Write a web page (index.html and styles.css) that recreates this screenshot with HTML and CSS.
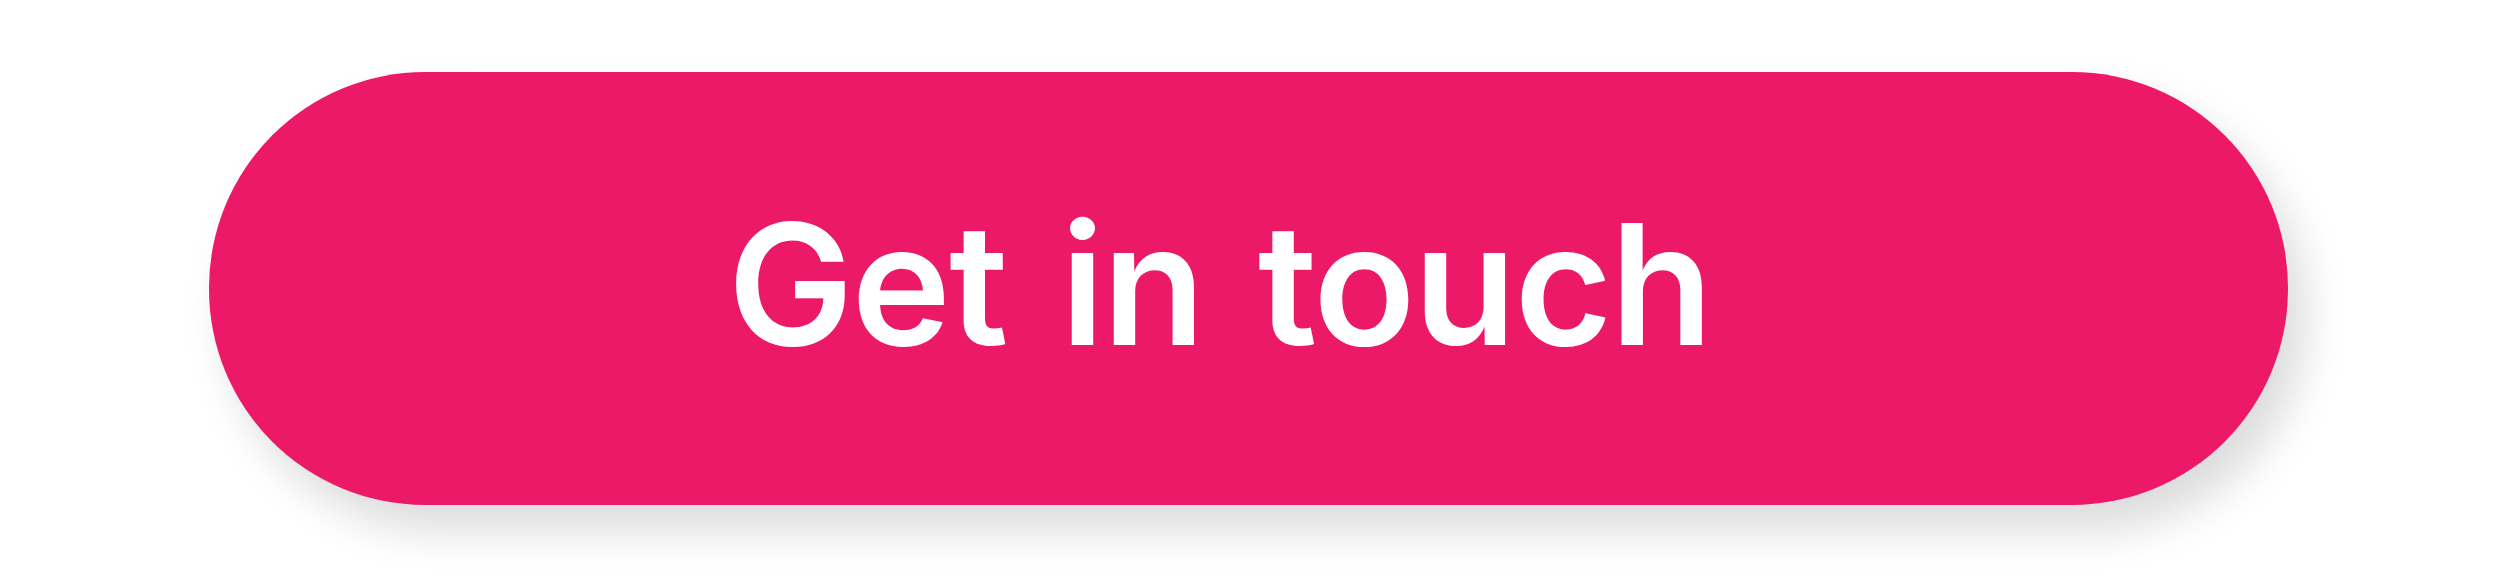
FILE: index.html
```html
<!DOCTYPE html>
<html lang="en">
<head>
    <meta charset="UTF-8">
    <title>Get in touch</title>
    <meta name="viewport" content="width=device-width, initial-scale=1.0">
    <link rel="stylesheet" href="styles.css">
</head>
<body>
    <div class="stage">
        <a class="cta" href="#contact">Get in touch</a>
    </div>
</body>
</html>
```

FILE: styles.css
```css
:root {
    --brand-pink: #ec1868;
    --text-light: #ffffff;
}

body {
    margin: 0;
    padding: 0;
    background-color: #ffffff;
    font-family: 'Inter', 'Roboto', sans-serif;
}

.stage {
    height: 581px;
    box-sizing: border-box;
    padding: 72px 0 0 209px;
}

.cta {
    display: flex;
    align-items: center;
    justify-content: center;
    box-sizing: border-box;
    width: 2079px;
    height: 433px;
    padding-right: 58px;
    padding-bottom: 10px;
    border-radius: 216px;
    background-color: var(--brand-pink);
    color: var(--text-light);
    font-size: 168px;
    font-weight: 600;
    letter-spacing: -2px;
    word-spacing: 14px;
    text-decoration: none;
    box-shadow: 18px 26px 44px rgba(0, 0, 0, 0.14);
}
```
